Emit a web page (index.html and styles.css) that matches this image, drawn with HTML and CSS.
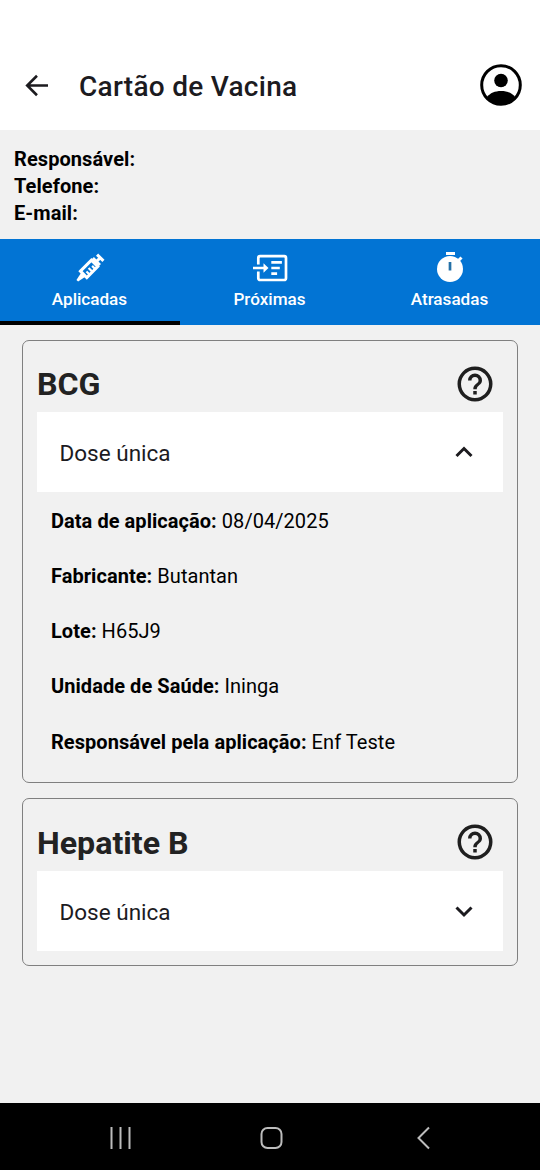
FILE: index.html
```html
<!DOCTYPE html>
<html lang="pt-BR">
<head>
<meta charset="utf-8">
<title>Cartão de Vacina</title>
<link rel="stylesheet" href="styles.css">
</head>
<body>
<svg class="defs" width="0" height="0">
  <symbol id="help" viewBox="0 0 24 24"><path d="M11 18h2v-2h-2v2M12 2a10 10 0 1 0 0 20 10 10 0 0 0 0-20m0 18c-4.41 0-8-3.59-8-8s3.59-8 8-8 8 3.59 8 8-3.59 8-8 8m0-14a4 4 0 0 0-4 4h2a2 2 0 1 1 4 0c0 2-3 1.75-3 5h2c0-2.25 3-2.5 3-5a4 4 0 0 0-4-4Z"/></symbol>
</svg>
<header class="appbar">
  <svg class="back" viewBox="0 0 24 24" fill="none" stroke="#1c1b1f" stroke-width="2.7"><path d="M24 12H3M12.500 1.800 2.300 12l10.200 10.200"/></svg>
  <h1 class="title">Cartão de Vacina</h1>
  <svg class="avatar" viewBox="0 0 42 42"><circle cx="21" cy="21" r="19.300" fill="none" stroke="#000" stroke-width="3"/><circle cx="21" cy="16.500" r="6.800"/><path d="M7 33C10 29 15 27 21 27s11 2 14 6c-3.500 4.600-8.500 7.500-14 7.500S10.500 37.600 7 33Z"/></svg>
</header>
<section class="contact">
  <p>Responsável:</p>
  <p>Telefone:</p>
  <p>E-mail:</p>
</section>
<nav class="tabs">
  <div class="tab active">
    <svg class="tab-icon" viewBox="0 0 36 36" fill="none" stroke="#fff"><g transform="rotate(-45 18 18)"><path stroke-width="3" d="M9 13.500h15.500v9H9zM25 18h7M27 13v10M32.500 13.500v9"/><path stroke-width="2.200" d="M13 18v5M17 17v6M21 18v5"/><path fill="#fff" stroke="none" d="M9 15 0 16.800v2.400L9 21Z"/></g></svg>
    <span>Aplicadas</span>
  </div>
  <div class="tab">
    <svg class="tab-icon" viewBox="0 0 36 36" fill="none" stroke="#fff" stroke-width="2.700"><path d="M6.300 14.500V8a1.800 1.800 0 0 1 1.800-1.800h24.100A1.800 1.800 0 0 1 34 8v20.200a1.800 1.800 0 0 1-1.800 1.800H8.100a1.800 1.800 0 0 1-1.800-1.800v-6.700M1 18h13M19.300 12.300h10.600M19.300 18h8.500M19.300 23.700h5.800"/><path fill="#fff" stroke="none" d="M11.500 13.200 16.500 18l-5 4.800Z"/></svg>
    <span>Próximas</span>
  </div>
  <div class="tab">
    <svg class="tab-icon" viewBox="0 0 36 36"><path fill="#fff" d="M14 2h9v3h-9z"/><circle cx="18" cy="19" r="13" fill="#fff"/><path d="m25.500 11.500 4-4" stroke="#fff" stroke-width="3"/><path d="M18 12v8.500" stroke="#2470a7" stroke-width="2.700"/></svg>
    <span>Atrasadas</span>
  </div>
</nav>
<main class="content">
  <article class="card">
    <div class="card-head"><h2>BCG</h2><svg class="help"><use href="#help"/></svg></div>
    <div class="dose"><span>Dose única</span><svg class="chevron" viewBox="0 0 20 20"><path d="m2.500 13 7.500-7.500 7.500 7.500"/></svg></div>
    <div class="details">
      <p><b>Data de aplicação:</b> 08/04/2025</p>
      <p><b>Fabricante:</b> Butantan</p>
      <p><b>Lote:</b> H65J9</p>
      <p><b>Unidade de Saúde:</b> Ininga</p>
      <p><b>Responsável pela aplicação:</b> Enf Teste</p>
    </div>
  </article>
  <article class="card">
    <div class="card-head closed"><h2>Hepatite B</h2><svg class="help"><use href="#help"/></svg></div>
    <div class="dose"><span>Dose única</span><svg class="chevron" viewBox="0 0 20 20"><path d="m2.500 5.500 7.500 7.500 7.500-7.500"/></svg></div>
  </article>
</main>
<footer class="sysnav">
  <svg viewBox="0 0 24 24"><path d="M3.500 1v22M12.500 1v22M21.500 1v22"/></svg>
  <svg viewBox="0 0 24 24"><rect x="1.500" y="2" width="20" height="20" rx="6"/></svg>
  <svg viewBox="0 0 24 24"><path d="M18 1.500 7.500 12 18 22.500"/></svg>
</footer>
</body>
</html>
```

FILE: styles.css
```css
* { box-sizing: border-box; }
body {
  margin: 0;
  height: 1170px;
  display: flex;
  flex-direction: column;
  background: #f1f1f1;
  color: #000;
  font-family: Roboto, sans-serif;
  overflow: hidden;
}
h1, h2, p { margin: 0; }
.defs { display: none; }
.appbar {
  height: 130px;
  padding: 42px 18.5px 2px 25px;
  display: flex;
  align-items: center;
  background: #fff;
}
.back { width: 23px; height: 23px; }
.title {
  flex: 1;
  margin: 3px 0 0 31px;
  font-size: 28px;
  font-weight: 500;
  line-height: 36px;
  letter-spacing: 0.28px;
  color: #1c1b1f;
}
.avatar { width: 42px; height: 42px; margin-top: -1px; }
.contact {
  height: 109px;
  padding: 16px 14px 14px;
  font-size: 20px;
  font-weight: 700;
  line-height: 27px;
  letter-spacing: 0.08px;
}
.tabs { height: 86px; display: flex; background: #0274d4; }
.tab {
  flex: 1;
  padding: 11px 1px 0 0;
  display: flex;
  flex-direction: column;
  align-items: center;
  color: #fff;
  font-size: 17.1px;
  font-weight: 500;
  line-height: 24px;
  border-bottom: 4px solid transparent;
}
.tab.active { border-bottom-color: #000; }
.tab-icon { width: 36px; height: 36px; margin-bottom: 1px; }
.content {
  flex: 1;
  padding: 15px 22px;
  display: flex;
  flex-direction: column;
  gap: 15px;
}
.card {
  padding: 14px;
  border: 1px solid #808080;
  border-radius: 7px;
}
.card-head {
  height: 57px;
  padding-right: 7px;
  display: flex;
  align-items: center;
  justify-content: space-between;
  color: #222;
}
.card-head.closed { height: 58px; }
.card-head h2 { font-size: 32.2px; font-weight: 700; line-height: 40px; margin-top: 1px; }
.help { width: 42px; height: 42px; fill: #1f1f1f; }
.dose {
  height: 80px;
  padding: 2px 29.5px 0 22.5px;
  display: flex;
  align-items: center;
  justify-content: space-between;
  background: #fff;
  color: #1c1b1f;
  font-size: 22.5px;
}
.chevron { width: 20px; height: 20px; fill: none; stroke: #1c1b1f; stroke-width: 3; }
.details {
  padding: 16px 14px 12.5px;
  display: flex;
  flex-direction: column;
  gap: 28.15px;
  font-size: 20px;
  line-height: 27px;
  letter-spacing: 0.05px;
}
.sysnav {
  height: 67px;
  padding: 3px 105px 0 108px;
  display: flex;
  align-items: center;
  justify-content: space-between;
  background: #000;
}
.sysnav svg { width: 24px; height: 24px; fill: none; stroke: #bcbcbc; stroke-width: 2; }
```
